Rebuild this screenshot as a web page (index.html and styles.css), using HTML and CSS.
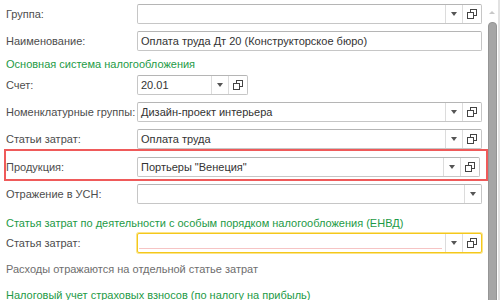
FILE: index.html
```html
<!DOCTYPE html>
<html lang="ru">
<head>
    <meta charset="UTF-8">
    <title>Статья затрат</title>
    <link rel="stylesheet" href="styles.css">
</head>
<body>
    <div class="window">
        <div class="form">
            <div class="row">
                <div class="label">Группа:</div>
                <div class="field">
                    <span class="value"></span>
                    <span class="btn drop"><svg width="6" height="4" viewBox="0 0 6 4"><path d="M0 0H6L3 4Z" fill="#555"/></svg></span>
                    <span class="btn open"><svg width="10" height="10" viewBox="0 0 10 10"><rect x="3.5" y="0.5" width="6" height="6" fill="#fff" stroke="#444"/><rect x="0.5" y="3.5" width="6" height="6" fill="#fff" stroke="#444"/></svg></span>
                </div>
            </div>
            <div class="row">
                <div class="label">Наименование:</div>
                <div class="field">
                    <span class="value">Оплата труда Дт 20 (Конструкторское бюро)</span>
                </div>
            </div>

            <div class="section">Основная система налогообложения</div>
            <div class="row">
                <div class="label">Счет:</div>
                <div class="field short">
                    <span class="value">20.01</span>
                    <span class="btn drop"><svg width="6" height="4" viewBox="0 0 6 4"><path d="M0 0H6L3 4Z" fill="#555"/></svg></span>
                    <span class="btn open"><svg width="10" height="10" viewBox="0 0 10 10"><rect x="3.5" y="0.5" width="6" height="6" fill="#fff" stroke="#444"/><rect x="0.5" y="3.5" width="6" height="6" fill="#fff" stroke="#444"/></svg></span>
                </div>
            </div>
            <div class="row">
                <div class="label">Номенклатурные группы:</div>
                <div class="field">
                    <span class="value">Дизайн-проект интерьера</span>
                    <span class="btn drop"><svg width="6" height="4" viewBox="0 0 6 4"><path d="M0 0H6L3 4Z" fill="#555"/></svg></span>
                    <span class="btn open"><svg width="10" height="10" viewBox="0 0 10 10"><rect x="3.5" y="0.5" width="6" height="6" fill="#fff" stroke="#444"/><rect x="0.5" y="3.5" width="6" height="6" fill="#fff" stroke="#444"/></svg></span>
                </div>
            </div>
            <div class="row">
                <div class="label">Статьи затрат:</div>
                <div class="field">
                    <span class="value">Оплата труда</span>
                    <span class="btn drop"><svg width="6" height="4" viewBox="0 0 6 4"><path d="M0 0H6L3 4Z" fill="#555"/></svg></span>
                    <span class="btn open"><svg width="10" height="10" viewBox="0 0 10 10"><rect x="3.5" y="0.5" width="6" height="6" fill="#fff" stroke="#444"/><rect x="0.5" y="3.5" width="6" height="6" fill="#fff" stroke="#444"/></svg></span>
                </div>
            </div>
            <div class="highlight">
                <div class="row">
                    <div class="label">Продукция:</div>
                    <div class="field">
                        <span class="value">Портьеры "Венеция"</span>
                        <span class="btn drop"><svg width="6" height="4" viewBox="0 0 6 4"><path d="M0 0H6L3 4Z" fill="#555"/></svg></span>
                        <span class="btn open"><svg width="10" height="10" viewBox="0 0 10 10"><rect x="3.5" y="0.5" width="6" height="6" fill="#fff" stroke="#444"/><rect x="0.5" y="3.5" width="6" height="6" fill="#fff" stroke="#444"/></svg></span>
                    </div>
                </div>
            </div>
            <div class="row">
                <div class="label">Отражение в УСН:</div>
                <div class="field">
                    <span class="value"></span>
                    <span class="btn drop"><svg width="6" height="4" viewBox="0 0 6 4"><path d="M0 0H6L3 4Z" fill="#555"/></svg></span>
                </div>
            </div>

            <div class="section gap">Статья затрат по деятельности с особым порядком налогообложения (ЕНВД)</div>
            <div class="row">
                <div class="label">Статья затрат:</div>
                <div class="field focused">
                    <span class="value required"></span>
                    <span class="btn drop"><svg width="6" height="4" viewBox="0 0 6 4"><path d="M0 0H6L3 4Z" fill="#555"/></svg></span>
                    <span class="btn open"><svg width="10" height="10" viewBox="0 0 10 10"><rect x="3.5" y="0.5" width="6" height="6" fill="#fff" stroke="#444"/><rect x="0.5" y="3.5" width="6" height="6" fill="#fff" stroke="#444"/></svg></span>
                </div>
            </div>
            <div class="note">Расходы отражаются на отдельной статье затрат</div>
            <div class="section">Налоговый учет страховых взносов (по налогу на прибыль)</div>
        </div>

        <div class="scrollbar">
            <div class="arrow"></div>
            <div class="thumb"></div>
        </div>
    </div>
</body>
</html>
```

FILE: styles.css
```css
body {
    margin: 0;
    background-color: #fff;
    font-family: 'Liberation Sans', Arial, sans-serif;
    font-size: 11px;
    color: #4d4d4d;
    overflow: hidden;
}

.window {
    display: flex;
    height: 300px;
}

.form {
    width: 476px;
    padding: 4px 4px 0 6px;
}

.row {
    display: flex;
    align-items: center;
    height: 20px;
    margin-bottom: 7px;
}

.label {
    width: 131px;
    flex-shrink: 0;
    white-space: nowrap;
}

.field {
    flex: 1;
    display: flex;
    height: 20px;
    box-sizing: border-box;
    border: 1px solid #c6c6c6;
    border-top-color: #b5b5b5;
    border-radius: 2px;
    background-color: #fff;
    color: #333;
}

.field.short {
    flex: none;
    width: 111px;
}

.value {
    flex: 1;
    padding-left: 3px;
    line-height: 18px;
    white-space: nowrap;
    overflow: hidden;
}

.btn {
    width: 16px;
    display: flex;
    align-items: center;
    justify-content: center;
    border-left: 1px solid #dcdcdc;
}

.btn.open {
    width: 18px;
}

.field.focused {
    border-color: #f4c81c;
    box-shadow: 0 0 0 1px #fbe48a;
}

.value.required {
    margin: 0 3px 3px 1px;
    border-bottom: 1px solid #f6c4c4;
}

.section {
    color: #1d9a46;
    line-height: 15px;
    margin-top: -1px;
    margin-bottom: 3px;
    white-space: nowrap;
}

.section.gap {
    margin-top: 12px;
    margin-bottom: 2px;
}

.highlight {
    margin: -7px -6px 3px -2px;
    padding: 6px 6px 2px 0;
    border: 2px solid #ef5a5a;
}

.highlight .row {
    margin-bottom: 0;
}

.note {
    color: #6e6e6e;
    line-height: 15px;
    margin: 9px 0 12px;
}

.scrollbar {
    width: 14px;
    border-right: 2px solid #e2e2e2;
    box-sizing: border-box;
}

.arrow {
    width: 0;
    height: 0;
    margin: 11px 0 0 3px;
    border-left: 3px solid transparent;
    border-right: 3px solid transparent;
    border-bottom: 3px solid #c8c8c8;
}

.thumb {
    width: 7px;
    height: 280px;
    margin: 8px 0 0 2px;
    background-color: #a6a6a6;
    border: 1px solid #959595;
    border-radius: 4px 4px 0 0;
}
```
